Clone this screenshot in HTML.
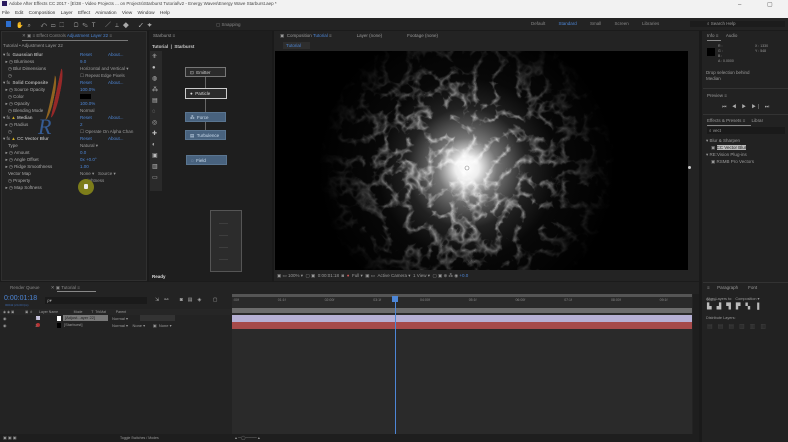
<!DOCTYPE html>
<html><head><meta charset="utf-8"><style>
*{margin:0;padding:0;box-sizing:border-box}
body{width:788px;height:442px;overflow:hidden;background:#1b1b1b;font-family:"Liberation Sans",sans-serif;font-size:4.5px;color:#9a9a9a;position:relative}
.a{position:absolute}
.t{position:absolute;white-space:nowrap}
.blue{color:#4d86d6}
</style></head><body>
<div class="a" style="left:0;top:0;width:788px;height:18px;background:#f2f2f2"></div>
<div class="a" style="left:2px;top:1px;width:5px;height:5px;background:#2a1a5e"></div>
<div class="t" style="left:9px;top:1px;color:#444;font-size:4.5px">Adobe After Effects CC 2017 - [E\38 - Video Projects ... on Projects\Starburst Tutorial\v2 - Energy Waves\Energy Wave Starburst.aep *</div>
<div class="t" style="left:2px;top:11px;color:#333;font-size:4.8px;word-spacing:4px">File Edit Composition Layer Effect Animation View Window Help</div>
<div class="t" style="left:738px;top:1px;color:#555;font-size:6px;letter-spacing:12px">– ▢ ✕</div>
<div class="a" style="left:0;top:18px;width:788px;height:12px;background:#232323"></div>
<div class="a" style="left:6px;top:21px;width:5px;height:6px;background:#2d6fd0"></div>
<div class="t" style="left:16px;top:20px;color:#aaa;font-size:6px;letter-spacing:4px">✋⌕ ↶▭⬚ ▢✎T ／⊥◆ ✓✦</div>
<div class="t" style="left:216px;top:22px;color:#888">▢ Snapping</div>
<div class="t" style="left:531px;top:21px;color:#888;word-spacing:12px">Default <span class="blue">Standard</span> Small&nbsp;Screen Libraries</div>
<div class="a" style="left:690px;top:21px;width:95px;height:6px;background:#1c1c1c"></div>
<div class="t" style="left:707px;top:21px;color:#999">⌕ Search Help</div>
<div class="a" style="left:1px;top:31px;width:146px;height:250px;background:#232323;border:1px solid #2f2f2f"></div>
<div class="t" style="left:22px;top:33px;color:#888">✕ ▣ ≡ Effect Controls <span class="blue">Adjustment Layer 22</span> ≡</div>
<div class="a" style="left:22px;top:40px;width:106px;height:1px;background:#777"></div>
<div class="t" style="left:3px;top:43px">Tutorial • Adjustment Layer 22</div>
<div class="t" style="left:3px;top:51px;line-height:7px;color:#aaa">
▾ fx &nbsp;<b>Gaussian Blur</b><br>&nbsp;&nbsp;▸ ◷ Blurriness<br>&nbsp;&nbsp;&nbsp;&nbsp;◷ Blur Dimensions<br>&nbsp;&nbsp;&nbsp;&nbsp;◷<br>▾ fx &nbsp;<b>Solid Composite</b><br>&nbsp;&nbsp;▸ ◷ Source Opacity<br>&nbsp;&nbsp;&nbsp;&nbsp;◷ Color<br>&nbsp;&nbsp;▸ ◷ Opacity<br>&nbsp;&nbsp;&nbsp;&nbsp;◷ Blending Mode<br>▾ fx <span style="color:#d4b020">▲</span> <b>Median</b><br>&nbsp;&nbsp;▸ ◷ Radius<br>&nbsp;&nbsp;&nbsp;&nbsp;◷<br>▾ fx <span style="color:#d4b020">▲</span> <b>CC Vector Blur</b><br>&nbsp;&nbsp;&nbsp;&nbsp;Type<br>&nbsp;&nbsp;▸ ◷ Amount<br>&nbsp;&nbsp;▸ ◷ Angle Offset<br>&nbsp;&nbsp;▸ ◷ Ridge Smoothness<br>&nbsp;&nbsp;&nbsp;&nbsp;Vector Map<br>&nbsp;&nbsp;&nbsp;&nbsp;◷ Property<br>&nbsp;&nbsp;▸ ◷ Map Softness</div>
<div class="t" style="left:80px;top:51px;line-height:7px">
<span class="blue">Reset</span>&nbsp;&nbsp;&nbsp;&nbsp;&nbsp;&nbsp;&nbsp;&nbsp;&nbsp;&nbsp;&nbsp;&nbsp;&nbsp;<span class="blue">About...</span><br><span class="blue">9.0</span><br>Horizontal and Vertical ▾<br>☐ Repeat Edge Pixels<br><span class="blue">Reset</span>&nbsp;&nbsp;&nbsp;&nbsp;&nbsp;&nbsp;&nbsp;&nbsp;&nbsp;&nbsp;&nbsp;&nbsp;&nbsp;<span class="blue">About...</span><br><span class="blue">100.0%</span><br><span style="background:#000;color:#000">■■■■</span><br><span class="blue">100.0%</span><br>Normal<br><span class="blue">Reset</span>&nbsp;&nbsp;&nbsp;&nbsp;&nbsp;&nbsp;&nbsp;&nbsp;&nbsp;&nbsp;&nbsp;&nbsp;&nbsp;<span class="blue">About...</span><br><span class="blue">2</span><br>☐ Operate On Alpha Chan<br><span class="blue">Reset</span>&nbsp;&nbsp;&nbsp;&nbsp;&nbsp;&nbsp;&nbsp;&nbsp;&nbsp;&nbsp;&nbsp;&nbsp;&nbsp;<span class="blue">About...</span><br>Natural ▾<br><span class="blue">0.0</span><br><span class="blue">0x +0.0°</span><br><span class="blue">1.00</span><br>None ▾&nbsp;&nbsp;&nbsp;Source ▾<br>&nbsp;&nbsp;&nbsp;&nbsp;Lightness</div>
<div class="a" style="left:52px;top:68px;width:8px;height:50px;border-right:4px solid #b52a2a;border-radius:50%;transform:rotate(12deg);opacity:.8"></div>
<div class="a" style="left:46px;top:75px;width:8px;height:45px;border-right:3px solid #c08020;border-radius:50%;transform:rotate(12deg);opacity:.7"></div>
<div class="t" style="left:38px;top:114px;font-size:22px;color:#3a6ab0;font-style:italic;font-family:'Liberation Serif',serif;opacity:.8">R</div>
<div class="a" style="left:78px;top:179px;width:16px;height:16px;border-radius:50%;background:#7d7d1a"></div>
<div class="a" style="left:84px;top:184px;width:4px;height:5px;background:#eee;border-radius:1px"></div>
<div class="a" style="left:149px;top:31px;width:124px;height:250px;background:#1e1e1e"></div>
<div class="t" style="left:153px;top:33px">Starburst ≡</div>
<div class="t" style="left:152px;top:44px;color:#ccc"><b>Tutorial &nbsp;| &nbsp;Starburst</b></div>
<div class="a" style="left:150px;top:51px;width:12px;height:140px;background:#2a2a2a"></div>
<div class="t" style="left:152px;top:52px;color:#bbb;font-size:6px;line-height:11px">⁜<br>●<br>◍<br>⁂<br>▤<br>◌<br>◎<br>✚<br>◐<br>▣<br>▥<br>▭</div>
<div class="a" style="left:185px;top:67px;width:41px;height:10px;background:#2b2b2b;border:1px solid #777;color:#ccc;padding:2px 0 0 4px">⊡ &nbsp;Emitter</div>
<div class="a" style="left:205px;top:77px;width:1px;height:12px;background:#666"></div>
<div class="a" style="left:185px;top:88px;width:42px;height:11px;background:#2b2b2b;border:1px solid #ccc;color:#ddd;padding:2px 0 0 4px">● &nbsp;Particle</div>
<div class="a" style="left:205px;top:99px;width:1px;height:32px;background:#666"></div>
<div class="a" style="left:185px;top:112px;width:41px;height:10px;background:#48627e;border:1px solid #5a7590;color:#cde;padding:2px 0 0 4px">⁂ &nbsp;Force</div>
<div class="a" style="left:185px;top:130px;width:41px;height:10px;background:#48627e;border:1px solid #5a7590;color:#cde;padding:2px 0 0 4px">▤ &nbsp;Turbulence</div>
<div class="a" style="left:186px;top:155px;width:41px;height:10px;background:#48627e;border:1px solid #5a7590;color:#cde;padding:2px 0 0 4px">◌ &nbsp;Field</div>
<div class="a" style="left:210px;top:210px;width:32px;height:62px;background:#2c2c2c;border:1px solid #555"></div>
<div class="t" style="left:219px;top:218px;color:#666;line-height:12px">——<br>——<br>——<br>——</div>
<div class="t" style="left:152px;top:274px;color:#ddd"><b>Ready</b></div>
<div class="a" style="left:274px;top:31px;width:425px;height:250px;background:#232323"></div>
<div class="t" style="left:280px;top:33px">▣ &nbsp;Composition <span class="blue">Tutorial</span> ≡&nbsp;&nbsp;&nbsp;&nbsp;&nbsp;&nbsp;&nbsp;&nbsp;&nbsp;&nbsp;&nbsp;&nbsp;&nbsp;&nbsp;&nbsp;&nbsp;&nbsp;&nbsp;&nbsp;&nbsp;Layer (none)&nbsp;&nbsp;&nbsp;&nbsp;&nbsp;&nbsp;&nbsp;&nbsp;&nbsp;&nbsp;&nbsp;&nbsp;&nbsp;&nbsp;&nbsp;&nbsp;&nbsp;&nbsp;&nbsp;&nbsp;Footage (none)</div>
<div class="a" style="left:283px;top:42px;width:27px;height:7px;background:#2e2e2e;color:#4d86d6;padding:1px 3px">Tutorial</div>
<div class="a" style="left:275px;top:51px;width:413px;height:219px;background:#000;overflow:hidden">
<svg width="413" height="219" viewBox="0 0 413 219">
<defs>
<radialGradient id="g" cx="192" cy="117" r="150" gradientUnits="userSpaceOnUse">
<stop offset="0" stop-color="#fff"/><stop offset=".08" stop-color="#eee"/><stop offset=".2" stop-color="#777"/><stop offset=".4" stop-color="#222"/><stop offset=".6" stop-color="#080808"/><stop offset="1" stop-color="#000"/></radialGradient>
<filter id="f" x="0" y="0" width="100%" height="100%"><feTurbulence type="turbulence" baseFrequency="0.045" numOctaves="3" seed="7"/><feColorMatrix values="0 0 0 0 1 0 0 0 0 1 0 0 0 0 1 -4 0 0 0 1.1"/></filter>
<radialGradient id="m" cx="192" cy="117" r="175" gradientUnits="userSpaceOnUse"><stop offset="0" stop-color="#fff"/><stop offset=".4" stop-color="#999"/><stop offset=".65" stop-color="#333"/><stop offset=".85" stop-color="#000"/></radialGradient>
<mask id="mk"><rect width="413" height="219" fill="url(#m)"/></mask>
</defs>
<ellipse cx="192" cy="117" rx="170" ry="130" fill="url(#g)"/>
<rect width="413" height="219" filter="url(#f)" mask="url(#mk)" opacity=".8"/>
<circle cx="192" cy="117" r="2" fill="none" stroke="#888" stroke-width=".6"/>
</svg></div>
<div class="a" style="left:688px;top:166px;width:3px;height:3px;background:#ccc;border-radius:50%"></div>
<div class="t" style="left:277px;top:273px;color:#999">▣ ▭ 100% ▾ &nbsp;▢ ▣ &nbsp;0:00:01:18 &nbsp;◙ &nbsp;<span style="color:#c55">●</span> &nbsp;Full ▾ &nbsp;▣ ▭ &nbsp;Active Camera ▾ &nbsp;1 View ▾ &nbsp;▢ ▣ ⊕ ⁂ ◉ <span class="blue">+0.0</span></div>
<div class="a" style="left:702px;top:31px;width:86px;height:411px;background:#222"></div>
<div class="t" style="left:707px;top:33px">Info ≡&nbsp;&nbsp;&nbsp;&nbsp;&nbsp;&nbsp;Audio</div>
<div class="a" style="left:707px;top:40px;width:14px;height:1px;background:#888"></div>
<div class="a" style="left:707px;top:48px;width:8px;height:8px;background:#000"></div>
<div class="t" style="left:718px;top:44px;line-height:5px;font-size:3.5px">R :<br>G :<br>B :<br>A : 0.0000</div>
<div class="t" style="left:755px;top:44px;line-height:5px;font-size:3.5px">X : 1330<br>Y : 548</div>
<div class="t" style="left:706px;top:70px;line-height:6px">Drop selection behind<br>Median</div>
<div class="a" style="left:703px;top:88px;width:85px;height:1px;background:#333"></div>
<div class="t" style="left:707px;top:93px">Preview ≡</div>
<div class="t" style="left:722px;top:104px;color:#aaa;font-size:5px;letter-spacing:2px">⏮ ◀ ▶ ▶| ⏭</div>
<div class="a" style="left:703px;top:114px;width:85px;height:1px;background:#333"></div>
<div class="t" style="left:707px;top:118px">Effects &amp; Presets ≡&nbsp;&nbsp;&nbsp;&nbsp;&nbsp;Librar</div>
<div class="a" style="left:707px;top:125px;width:44px;height:1px;background:#888"></div>
<div class="a" style="left:707px;top:127px;width:78px;height:7px;background:#1a1a1a;padding:1px 2px">⌕ vect</div>
<div class="t" style="left:706px;top:137px;line-height:7px">▾ Blur &amp; Sharpen<br>&nbsp;&nbsp;&nbsp;&nbsp;▣ <span style="background:#bbb;color:#222">CC Vector Blur</span><br>▾ RE:Vision Plug-ins<br>&nbsp;&nbsp;&nbsp;&nbsp;▣ RSMB Pro Vectors</div>
<div class="a" style="left:703px;top:282px;width:85px;height:1px;background:#333"></div>
<div class="t" style="left:707px;top:285px">≡&nbsp;&nbsp;&nbsp;&nbsp;&nbsp;&nbsp;Paragraph&nbsp;&nbsp;&nbsp;&nbsp;&nbsp;&nbsp;&nbsp;&nbsp;Font</div>
<div class="t" style="left:706px;top:296px;font-size:3.8px">Align Layers to: &nbsp;&nbsp;Composition ▾</div>
<div class="t" style="left:707px;top:303px;color:#bbb;font-size:6px;letter-spacing:5px">▙▟▜▛▚▐</div>
<div class="t" style="left:706px;top:316px;font-size:3.8px">Distribute Layers:</div>
<div class="t" style="left:707px;top:323px;color:#444;font-size:6px;letter-spacing:5px">▤▤▤▥▥▥</div>
<div class="a" style="left:0;top:282px;width:700px;height:160px;background:#232323"></div>
<div class="t" style="left:10px;top:285px;color:#888">Render Queue&nbsp;&nbsp;&nbsp;&nbsp;&nbsp;&nbsp;&nbsp;&nbsp;&nbsp;✕ ▣ Tutorial ≡</div>
<div class="a" style="left:57px;top:291px;width:39px;height:1px;background:#888"></div>
<div class="t" style="left:4px;top:295px;color:#4d86d6;font-size:7px">0:00:01:18</div>
<div class="t" style="left:5px;top:303px;color:#3d6ab0;font-size:3px">00042 (24.00 fps)</div>
<div class="a" style="left:45px;top:297px;width:102px;height:7px;background:#1a1a1a;padding:1px 2px">ρ▾</div>
<div class="t" style="left:155px;top:297px;color:#aaa;font-size:5px;letter-spacing:5px">⇲⚯ ◙▤◈ ▢</div>
<div class="a" style="left:0;top:309px;width:232px;height:6px;background:#262626"></div>
<div class="t" style="left:3px;top:310px;font-size:3.5px">◉ ◉ ▣ &nbsp;&nbsp;&nbsp;&nbsp;&nbsp;&nbsp;&nbsp;&nbsp;&nbsp;&nbsp;▣ &nbsp;#&nbsp;&nbsp;&nbsp;&nbsp;&nbsp;&nbsp;&nbsp;Layer Name&nbsp;&nbsp;&nbsp;&nbsp;&nbsp;&nbsp;&nbsp;&nbsp;&nbsp;&nbsp;&nbsp;&nbsp;&nbsp;&nbsp;&nbsp;&nbsp;Mode&nbsp;&nbsp;&nbsp;&nbsp;&nbsp;&nbsp;&nbsp;&nbsp;&nbsp;T&nbsp;&nbsp;TrkMat&nbsp;&nbsp;&nbsp;&nbsp;&nbsp;&nbsp;&nbsp;&nbsp;&nbsp;&nbsp;Parent</div>
<div class="a" style="left:36px;top:316px;width:4px;height:4px;background:#c8c4e0"></div>
<div class="a" style="left:36px;top:323px;width:4px;height:4px;background:#b83030;border-radius:50%"></div>
<div class="t" style="left:3px;top:315px;line-height:7px;font-size:4px">◉&nbsp;&nbsp;&nbsp;&nbsp;&nbsp;&nbsp;&nbsp;&nbsp;&nbsp;&nbsp;&nbsp;&nbsp;&nbsp;&nbsp;&nbsp;&nbsp;&nbsp;&nbsp;&nbsp;&nbsp;&nbsp;&nbsp;&nbsp;&nbsp;&nbsp;&nbsp;1<br>◉&nbsp;&nbsp;&nbsp;&nbsp;&nbsp;&nbsp;&nbsp;&nbsp;&nbsp;&nbsp;&nbsp;&nbsp;&nbsp;&nbsp;&nbsp;&nbsp;&nbsp;&nbsp;&nbsp;&nbsp;&nbsp;&nbsp;&nbsp;&nbsp;&nbsp;&nbsp;2</div>
<div class="a" style="left:57px;top:316px;width:4px;height:5px;background:#fff"></div>
<div class="a" style="left:57px;top:323px;width:4px;height:5px;background:#000"></div>
<div class="a" style="left:63px;top:315px;width:45px;height:6px;background:#777;color:#222;font-size:4px;padding:0 2px">[Adjust...ayer 22]</div>
<div class="t" style="left:64px;top:322px;font-size:4px">[Starburst]</div>
<div class="t" style="left:112px;top:315px;line-height:7px;font-size:4px">Normal ▾&nbsp;&nbsp;&nbsp;&nbsp;&nbsp;&nbsp;&nbsp;&nbsp;&nbsp;&nbsp;&nbsp;&nbsp;&nbsp;&nbsp;&nbsp;&nbsp;&nbsp;&nbsp;&nbsp;&nbsp;&nbsp;&nbsp;&nbsp;▣&nbsp;&nbsp;None ▾<br>Normal ▾&nbsp;&nbsp;&nbsp;&nbsp;None ▾&nbsp;&nbsp;&nbsp;&nbsp;&nbsp;&nbsp;&nbsp;▣&nbsp;&nbsp;None ▾</div>
<div class="a" style="left:140px;top:315px;width:35px;height:6px;background:#333"></div>
<div class="a" style="left:232px;top:294px;width:460px;height:140px;background:#2a2a2a"></div>
<div class="a" style="left:232px;top:294px;width:460px;height:3px;background:#555"></div>
<div class="t" style="left:233px;top:298px;color:#888;font-size:3.5px;word-spacing:38px">:00f 01:1f 02:00f 03:1f 04:00f 05:1f 06:00f 07:1f 08:00f 09:1f 10:00f</div>
<div class="a" style="left:232px;top:308px;width:460px;height:5px;background:#6c6c6c"></div>
<div class="a" style="left:232px;top:315px;width:460px;height:7px;background:#b6b0d4"></div>
<div class="a" style="left:232px;top:322px;width:460px;height:7px;background:#a64a4a"></div>
<div class="a" style="left:395px;top:297px;width:1px;height:137px;background:#4d86d6"></div>
<div class="a" style="left:392px;top:296px;width:6px;height:6px;background:#4d86d6"></div>
<div class="a" style="left:693px;top:294px;width:9px;height:140px;background:#1e1e1e"></div>
<div class="a" style="left:0;top:434px;width:700px;height:8px;background:#1e1e1e"></div>
<div class="t" style="left:120px;top:436px;font-size:3.5px">Toggle Switches / Modes</div>
<div class="t" style="left:3px;top:435px;font-size:4px">▣ ▣ ▣</div>
<div class="t" style="left:235px;top:435px;font-size:4px">▴ ─◯──── ▴</div>
<div class="a" style="left:147px;top:31px;width:2px;height:251px;background:#1a1a1a"></div>
<div class="a" style="left:272px;top:31px;width:2px;height:251px;background:#1a1a1a"></div>
<div class="a" style="left:699px;top:31px;width:3px;height:411px;background:#1a1a1a"></div>
</body></html>
